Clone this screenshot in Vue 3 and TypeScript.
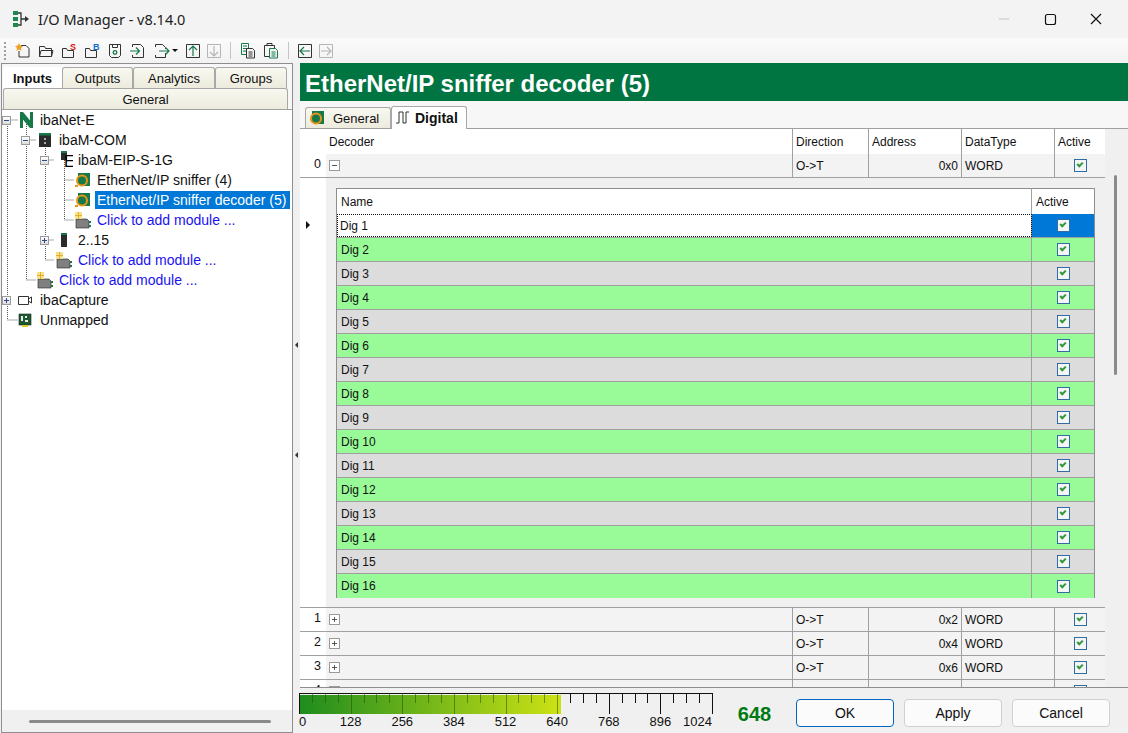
<script setup lang="ts">
interface TreeNode {
  label: string
  level: number
  icon: string
  toggle?: '+' | '-'
  link?: boolean
  selected?: boolean
}

const tree: TreeNode[] = [
  { label: 'ibaNet-E', level: 0, icon: 'net', toggle: '-' },
  { label: 'ibaM-COM', level: 1, icon: 'com', toggle: '-' },
  { label: 'ibaM-EIP-S-1G', level: 2, icon: 'eip', toggle: '-' },
  { label: 'EtherNet/IP sniffer (4)', level: 3, icon: 'mod' },
  { label: 'EtherNet/IP sniffer decoder (5)', level: 3, icon: 'mod', selected: true },
  { label: 'Click to add module ...', level: 3, icon: 'add', link: true },
  { label: '2..15', level: 2, icon: 'slot', toggle: '+' },
  { label: 'Click to add module ...', level: 2, icon: 'add', link: true },
  { label: 'Click to add module ...', level: 1, icon: 'add', link: true },
  { label: 'ibaCapture', level: 0, icon: 'cam', toggle: '+' },
  { label: 'Unmapped', level: 0, icon: 'unm' },
]

const digs = Array.from({ length: 16 }, (_, i) => `Dig ${i + 1}`)
const rows = [
  { n: 1, addr: '0x2' },
  { n: 2, addr: '0x4' },
  { n: 3, addr: '0x6' },
  { n: 4, addr: '0x8' },
]

const labels = [0, 128, 256, 384, 512, 640, 768, 896, 1024]
const ticks = Array.from({ length: 33 }, (_, i) => i)
const scale = 413 / 1024
function tickX(i: number) {
  return Math.round(i * 32 * scale) + 0.5
}
function labelLeft(v: number) {
  return `${v * scale}px`
}
</script>

<template>
  <div class="win">
    <header class="titlebar">
      <svg class="app-icon" width="20" height="20" viewBox="0 0 20 20">
        <path d="M6 4h4v12H6M10 10h5" fill="none" stroke="#333" stroke-width="1.3" />
        <path d="M2 2h5v4H2zM2 8h5v4H2zM2 14h5v4H2z" fill="#1c8a4e" />
        <path d="M14 7l4 3-4 3z" fill="#333" />
      </svg>
      <span class="title">I/O Manager - v8.14.0</span>
      <div class="controls">
        <svg width="46" height="38" viewBox="0 0 46 38"><path d="M18 19h10" stroke="#c4c4c4" /></svg>
        <svg width="46" height="38" viewBox="0 0 46 38"><rect x="18.5" y="14.5" width="10" height="10" rx="2" fill="none" stroke="#111" stroke-width="1.2" /></svg>
        <svg width="46" height="38" viewBox="0 0 46 38"><path d="M18 14l10 10M28 14l-10 10" stroke="#111" stroke-width="1.2" /></svg>
      </div>
    </header>

    <div class="toolbar">
      <span class="grip"></span>
      <svg class="tool" width="18" height="18" viewBox="0 0 18 18">
        <path d="M7 3.5h5l3 3v8.500H5V9" fill="none" stroke="#333" />
        <path d="M5 1l1.200 2.500L9 4 7 6l.5 2.800L5 7.500 2.500 8.800 3 6 1 4l2.800-.5z" fill="#f0a020" />
      </svg>
      <svg class="tool" width="18" height="18" viewBox="0 0 18 18"><path d="M2.500 14.500v-10h5l1 2h6v8zM2.500 14.500l1.500-6h12l-1.500 6" fill="none" stroke="#333" /></svg>
      <svg class="tool" width="18" height="18" viewBox="0 0 18 18">
        <path d="M2.500 15.500v-9h4l1 2h6v7z" fill="none" stroke="#333" />
        <text x="10" y="8" class="tl red">S</text>
      </svg>
      <svg class="tool" width="18" height="18" viewBox="0 0 18 18">
        <path d="M2.500 15.500v-9h4l1 2h6v7z" fill="none" stroke="#333" />
        <text x="10" y="8" class="tl blue">B</text>
      </svg>
      <svg class="tool" width="18" height="18" viewBox="0 0 18 18">
        <path d="M3.500 2.500h11v11l-2 2h-7l-2-2z M6.500 2.500v3h5v-3" fill="none" stroke="#333" />
        <circle cx="9" cy="10.500" r="1.800" fill="none" stroke="#17794a" stroke-width="1.300" />
      </svg>
      <svg class="tool" width="18" height="18" viewBox="0 0 18 18">
        <path d="M3.500 5V2.500h8l3 3v10h-11V13" fill="none" stroke="#333" />
        <path d="M1 9h9M7 5.500L10.500 9 7 12.500" fill="none" stroke="#17794a" stroke-width="1.200" />
      </svg>
      <svg class="tool wide" width="18" height="18" viewBox="0 0 18 18">
        <path d="M3.500 5V2.500h7l3 3V7M13.500 11v4.500h-10V13" fill="none" stroke="#333" />
        <path d="M7 9h10M13.500 5.500L17 9l-3.500 3.500" fill="none" stroke="#17794a" stroke-width="1.200" />
      </svg>
      <span class="caret"></span>
      <svg class="tool" width="16" height="16" viewBox="0 0 16 16">
        <path d="M1.500 1.500h13v13h-13z" fill="none" stroke="#333" />
        <path d="M8 13V3.500M4 7l4-4 4 4" fill="none" stroke="#17794a" stroke-width="1.200" />
      </svg>
      <svg class="tool" width="16" height="16" viewBox="0 0 16 16">
        <path d="M1.500 1.500h13v13h-13z" fill="none" stroke="#b5b5b5" />
        <path d="M8 3v9.500M4 9l4 4 4-4" fill="none" stroke="#b5b5b5" stroke-width="1.200" />
      </svg>
      <span class="sep"></span>
      <svg class="tool" width="18" height="18" viewBox="0 0 18 18">
        <path d="M2.500 1.500h7v11h-7zM4 4h4M4 6.500h4M4 9h4" fill="none" stroke="#17794a" />
        <path d="M7.500 6.500h6l2 2v7.500h-8z M9.500 10h4M9.500 12h4M9.500 14h4" fill="#f3f3f3" stroke="#333" />
      </svg>
      <svg class="tool" width="18" height="18" viewBox="0 0 18 18">
        <path d="M2.500 3.500h10v11h-10zM5 3.500v-2h5v2" fill="none" stroke="#333" />
        <path d="M7.500 6.500h6l2 2v7.500h-8z M9.500 10h4M9.500 12h4M9.500 14h4" fill="#f3f3f3" stroke="#17794a" />
      </svg>
      <span class="sep"></span>
      <svg class="tool" width="16" height="16" viewBox="0 0 16 16">
        <path d="M1.500 1.500h13v13h-13z" fill="none" stroke="#333" />
        <path d="M13 8H3.500M7 4L3 8l4 4" fill="none" stroke="#17794a" stroke-width="1.200" />
      </svg>
      <svg class="tool" width="16" height="16" viewBox="0 0 16 16">
        <path d="M1.500 1.500h13v13h-13z" fill="none" stroke="#b5b5b5" />
        <path d="M3 8h9.500M9 4l4 4-4 4" fill="none" stroke="#b5b5b5" stroke-width="1.200" />
      </svg>
    </div>

    <main class="body">
      <aside class="left">
        <div class="tabs">
          <div class="tab-row">
            <span class="ltab active">Inputs</span>
            <span class="ltab w-out">Outputs</span>
            <span class="ltab w-ana">Analytics</span>
            <span class="ltab w-grp">Groups</span>
          </div>
          <div class="tab-row"><span class="ltab full">General</span></div>
        </div>
        <div class="tree">
          <svg class="tree-lines" width="100" height="215" viewBox="0 0 100 215">
            <path
              d="M5.500 10H16M5.500 10V210M5.500 210H16M24.500 10V170H34M24.500 30H34M43.500 30V150H52M43.500 50H52M62.500 50V110H72M62.500 70H72M62.500 90H72M43.500 130H52"
              fill="none"
              stroke="#555"
              stroke-dasharray="1 1"
            />
          </svg>
          <div v-for="node in tree" :key="node.label + node.level" class="node" :style="{ paddingLeft: node.level * 19 + 'px' }">
            <span class="toggle-slot">
              <span v-if="node.toggle" class="toggle" :class="node.toggle === '-' ? 'minus' : 'plus'"></span>
            </span>
            <svg class="ticon" width="18" height="18" viewBox="0 0 18 18">
              <template v-if="node.icon === 'net'">
                <path d="M3 1h3v16H3zM13 1h3v16h-3z" fill="#17794a" />
                <path d="M3 1h3l10 12v4h-3L3 5z" fill="#17794a" />
              </template>
              <template v-else-if="node.icon === 'com'">
                <rect x="3" y="2" width="12" height="14" fill="#2b2b2b" />
                <rect x="3" y="2" width="12" height="2.500" fill="#17794a" />
                <path d="M8 7h2v2H8zM8 11h2v2H8z" fill="#aaa" />
              </template>
              <template v-else-if="node.icon === 'eip'">
                <rect x="6" y="0" width="6" height="9" fill="#2b2b2b" />
                <rect x="6" y="0" width="6" height="2" fill="#17794a" />
                <text x="9" y="16" class="eip">EIP</text>
              </template>
              <template v-else-if="node.icon === 'mod'">
                <path d="M4 2h12v13H7l-3-3z" fill="#17794a" />
                <circle cx="8" cy="9.500" r="5" fill="none" stroke="#e8941a" stroke-width="2" />
                <circle cx="8" cy="9.500" r="3" fill="#17794a" />
                <path d="M1 14h3v2H1z" fill="#e8941a" />
              </template>
              <template v-else-if="node.icon === 'add'">
                <path d="M2 8h11l2 2v7H2z" fill="#808080" stroke="#222" stroke-width=".6" />
                <path d="M1 1h7v7H1z" fill="#f7e28a" />
                <path d="M4.500 1v7M1 4.500h7" stroke="#e0b030" />
                <path d="M15 10h2v2h-2zM15 14h2v2h-2z" fill="#17794a" />
              </template>
              <template v-else-if="node.icon === 'slot'">
                <rect x="6" y="2" width="6" height="14" fill="#2b2b2b" />
                <rect x="6" y="2" width="6" height="2" fill="#17794a" />
              </template>
              <template v-else-if="node.icon === 'cam'">
                <path d="M1.500 5.500h10v8h-10z M11.500 8l3-2v6l-3-2" fill="#fff" stroke="#333" />
              </template>
              <template v-else>
                <rect x="2" y="3" width="12" height="11" fill="#1c5a34" stroke="#222" stroke-width=".6" />
                <path d="M4 5h2v5H4zM8 5h2v2H8zM8 9h3v2H8z" fill="#e9e9e9" />
                <path d="M5 14h6v2H5z" fill="#d7d020" />
              </template>
            </svg>
            <span class="nlabel" :class="{ link: node.link, selected: node.selected }">{{ node.label }}</span>
          </div>
          <div class="hscroll"></div>
        </div>
      </aside>

      <div class="splitter">
        <span class="arrow left-arrow"></span>
        <span class="arrow left-arrow"></span>
      </div>

      <section class="right">
        <h1 class="heading">EtherNet/IP sniffer decoder (5)</h1>
        <div class="rtabs">
          <span class="rtab">
            <svg width="18" height="18" viewBox="0 0 18 18">
              <path d="M4 2h12v13H7l-3-3z" fill="#17794a" />
              <circle cx="8" cy="9.500" r="5" fill="none" stroke="#e8941a" stroke-width="2" />
              <circle cx="8" cy="9.500" r="2.500" fill="#17794a" />
            </svg>
            General
          </span>
          <span class="rtab active">
            <svg width="16" height="16" viewBox="0 0 16 16">
              <path d="M1 13h3V2h4v11h3V2h3" fill="none" stroke="#333" />
            </svg>
            Digital
          </span>
        </div>

        <div class="grid-wrap">
          <div class="grid">
            <div class="grid-main">
              <div class="mrow mhead">
                <span class="gutter"></span>
                <span class="c dec">Decoder</span>
                <span class="c">Direction</span>
                <span class="c">Address</span>
                <span class="c">DataType</span>
                <span class="c">Active</span>
              </div>

              <div class="mrow mbody">
                <span class="gutter num">0</span>
                <span class="c dec"><span class="box minus"></span></span>
                <span class="c">O-&gt;T</span>
                <span class="c right-t">0x0</span>
                <span class="c">WORD</span>
                <span class="c mid"><span class="check"></span></span>
              </div>

              <div class="detail">
                <span class="gutter">
                  <span class="row-arrow"></span>
                </span>
                <div class="subgrid">
                  <div class="srow shead">
                    <span class="sc name">Name</span>
                    <span class="sc">Active</span>
                  </div>
                  <div
                    v-for="(d, i) in digs"
                    :key="d"
                    class="srow"
                    :class="{ current: i === 0, green: i % 2 === 1, gray: i > 0 && i % 2 === 0 }"
                  >
                    <span class="sc name"><span class="cell-text">{{ d }}</span></span>
                    <span class="sc mid"><span class="check"></span></span>
                  </div>
                </div>
              </div>

              <div v-for="r in rows" :key="r.n" class="mrow mbody">
                <span class="gutter num">{{ r.n }}</span>
                <span class="c dec"><span class="box plus"></span></span>
                <span class="c">O-&gt;T</span>
                <span class="c right-t">{{ r.addr }}</span>
                <span class="c">WORD</span>
                <span class="c mid"><span class="check"></span></span>
              </div>
            </div>
            <div class="vscroll"><span class="thumb"></span></div>
          </div>
        </div>

        <footer class="foot">
          <div class="gauge">
            <svg class="scale" width="416" height="24" viewBox="0 0 416 24">
              <defs>
                <linearGradient id="fill" x1="0" x2="1" y1="0" y2="0">
                  <stop offset="0" stop-color="#1e8c1e" />
                  <stop offset="1" stop-color="#cde214" />
                </linearGradient>
              </defs>
              <rect x="0" y="2" width="262" height="19" fill="url(#fill)" />
              <path d="M0.500 0V21M0 0.500H414" stroke="#111" fill="none" />
              <path
                v-for="i in ticks"
                :key="i"
                :d="`M${tickX(i)} 0V${i % 4 === 0 ? 21 : 10}`"
                :stroke="tickX(i) < 262 ? 'rgba(40,80,0,.55)' : '#111'"
              />
              <path d="M0.500 0V21" stroke="#111" />
            </svg>
            <span v-for="v in labels" :key="v" class="glabel" :class="{ first: v === 0, last: v === 1024 }" :style="{ left: labelLeft(v) }">{{ v }}</span>
          </div>
          <span class="value">648</span>
          <button class="btn primary" type="button">OK</button>
          <button class="btn" type="button">Apply</button>
          <button class="btn" type="button">Cancel</button>
        </footer>
      </section>
    </main>
  </div>
</template>

<style>
html, body {
  margin: 0;
  background: #f3f3f3;
}
</style>

<style scoped>
.win {
  width: 1128px;
  height: 733px;
  overflow: hidden;
  display: flex;
  flex-direction: column;
  background: #f0f0f0;
  font-family: "Liberation Sans", Arial, sans-serif;
  color: #111;
  box-sizing: border-box;
}

.titlebar {
  height: 38px;
  flex: none;
  display: flex;
  align-items: center;
  background: #f3f3f3;
  padding-left: 11px;
}
.app-icon { margin-right: 7px; }
.title { font-size: 14.500px; color: #222; font-family: "Noto Sans", sans-serif; }
.controls { margin-left: auto; display: flex; margin-right: 9px; }

.toolbar {
  height: 25px;
  flex: none;
  display: flex;
  align-items: center;
  gap: 5px;
  padding-left: 4px;
  background: linear-gradient(#fbfbfb, #f2f2f2);
}
.grip {
  width: 2px;
  height: 18px;
  margin-right: 3px;
  background: repeating-linear-gradient(#a0a0a0 0 2px, transparent 2px 4px);
}
.tool { flex: none; }
.tool.wide { margin-right: -3px; }
.tl { font: 700 9px "Liberation Sans", sans-serif; }
.red { fill: #e01010; }
.blue { fill: #1070d0; }
.caret {
  width: 0;
  height: 0;
  border: 3px solid transparent;
  border-top: 3px solid #111;
  border-bottom: 0;
  margin-right: 2px;
}
.sep { width: 1px; height: 17px; background: #c4c4c4; margin: 0 3px; }

.body {
  flex: 1;
  min-height: 0;
  display: flex;
}

.left {
  width: 292px;
  margin-left: 1px;
  box-sizing: border-box;
  border: 1px solid #8e8e8e;
  display: flex;
  flex-direction: column;
  background: #fff;
}
.tabs {
  background: #f7f7f7;
  padding-top: 3px;
  border-bottom: 1px solid #a0a0a0;
  flex: none;
}
.tab-row { display: flex; height: 21px; padding: 0 1px; }
.tab-row + .tab-row { height: 21px; }
.ltab {
  box-sizing: border-box;
  text-align: center;
  font-size: 13px;
  line-height: 21px;
  background: linear-gradient(#f8f8f0, #ecebdd);
  border: 1px solid #a8a8a8;
  border-bottom: 0;
  border-radius: 3px 3px 0 0;
  width: 59px;
}
.ltab.active { background: #fff; font-weight: 700; border-color: #fff; }
.w-out { width: 71px; margin-left: 0; }
.w-ana { width: 82px; }
.w-grp { width: 72px; }
.ltab.full { width: 285px; }

.tree {
  flex: 1;
  position: relative;
  padding-top: 0;
  background: #fff;
}
.tree-lines { position: absolute; left: 0; top: 0; }
.node {
  height: 20px;
  display: flex;
  align-items: center;
  position: relative;
}
.toggle-slot { width: 15px; flex: none; display: flex; align-items: center; }
.toggle {
  width: 9px;
  height: 9px;
  box-sizing: border-box;
  border: 1px solid #9a9a9a;
  background: linear-gradient(#fff, #dcdcdc);
  margin-left: 0;
  position: relative;
}
.toggle::before {
  content: "";
  position: absolute;
  left: 1px;
  right: 1px;
  top: 3px;
  height: 1px;
  background: #2a4a8a;
}
.toggle.plus::after {
  content: "";
  position: absolute;
  top: 1px;
  bottom: 1px;
  left: 3px;
  width: 1px;
  background: #2a4a8a;
}
.ticon { flex: none; margin-right: 3px; }
.nlabel {
  font-size: 14px;
  line-height: 18px;
  padding: 0 2px;
  white-space: nowrap;
  color: #111;
}
.nlabel.link { color: #1a12f0; }
.nlabel.selected { background: #0078d7; color: #fff; padding-right: 4px; }
.hscroll {
  position: absolute;
  left: 27px;
  right: 21px;
  bottom: 9px;
  height: 3px;
  border-radius: 2px;
  background: #8a8a8a;
}
.tree::after {
  content: "";
  position: absolute;
  left: 0;
  right: 0;
  bottom: 0;
  height: 22px;
  background: #f0f0f0;
}
.hscroll { z-index: 1; }

.splitter {
  width: 7px;
  flex: none;
  display: flex;
  flex-direction: column;
  align-items: center;
  padding-top: 279px;
  gap: 104px;
}
.arrow {
  width: 0;
  height: 0;
  border: 3px solid transparent;
  border-left: 0;
  border-right: 3px solid #333;
}

.right {
  flex: 1;
  min-width: 0;
  display: flex;
  flex-direction: column;
  background: #f7f7f7;
}
.heading {
  margin: 0;
  height: 38px;
  flex: none;
  background: #007542;
  color: #fff;
  font-size: 24px;
  font-weight: 700;
  line-height: 42px;
  padding-left: 5px;
  white-space: nowrap;
}
.rtabs {
  height: 25px;
  flex: none;
  display: flex;
  align-items: flex-end;
  padding: 0 0 0 5px;
  border-bottom: 1px solid #a0a0a0;
  background: #f7f7f7;
  box-sizing: border-box;
  margin-top: 3px;
}
.rtab {
  height: 21px;
  box-sizing: border-box;
  border: 1px solid #a8a8a8;
  border-bottom: 0;
  border-radius: 3px 3px 0 0;
  background: linear-gradient(#f8f8f0, #ecebdd);
  font-size: 13px;
  display: flex;
  align-items: center;
  gap: 7px;
  padding: 0 7px 0 2px;
  width: 86px;
}
.rtab.active {
  background: #fff;
  font-weight: 700;
  font-size: 14px;
  width: 76px;
  height: 23px;
  margin-bottom: -1px;
  gap: 4px;
  padding-left: 3px;
}

.grid-wrap {
  flex: 1;
  min-height: 0;
  background: #fff;
  overflow: hidden;
  border-bottom: 1px solid #8e8e8e;
}
.grid { display: flex; height: 100%; font-size: 12px; }
.grid-main { width: 805px; flex: none; overflow: hidden; background: #f0f0f0; }
.vscroll {
  flex: 1;
  background: #f0f0f0;
  position: relative;
}
.thumb {
  position: absolute;
  left: 9px;
  top: 46px;
  width: 3px;
  height: 200px;
  border-radius: 2px;
  background: #8a8a8a;
}

.gutter {
  width: 26px;
  flex: none;
  box-sizing: border-box;
  background: #fff;
}
.num { text-align: right; padding-right: 5px; line-height: 21px; font-size: 12.500px; }
.mrow {
  display: grid;
  grid-template-columns: 26px 467px 76px 93px 93px 50px;
  height: 24px;
}
.mrow > .c { border-right: 1px solid #a0a0a0; }
.mrow > .c:last-child { border-right: 0; }
.c {
  display: flex;
  align-items: center;
  padding: 0 3px;
  box-sizing: border-box;
  white-space: nowrap;
  min-width: 0;
}
.mhead { height: 25px; background: #fff; }
.mhead > .c { padding-left: 3px; }
.mbody {
  background: #f3f3f3;
  border-bottom: 1px solid #a0a0a0;
  box-sizing: border-box;
}
.right-t { justify-content: flex-end; }
.mid { justify-content: center; }
.box {
  width: 11px;
  height: 11px;
  box-sizing: border-box;
  border: 1px solid #9a9a9a;
  background: #fff;
  position: relative;
}
.box::before {
  content: "";
  position: absolute;
  left: 2px;
  right: 2px;
  top: 4px;
  height: 1px;
  background: #555;
}
.box.plus::after {
  content: "";
  position: absolute;
  top: 2px;
  bottom: 2px;
  left: 4px;
  width: 1px;
  background: #555;
}
.check {
  width: 13px;
  height: 13px;
  box-sizing: border-box;
  border: 1px solid #2f6ea5;
  background: #f5f5f5;
  position: relative;
}
.check::after {
  content: "";
  position: absolute;
  left: 3px;
  top: 1px;
  width: 4px;
  height: 6px;
  border: solid #2f9a3a;
  border-width: 0 2px 2px 0;
  transform: rotate(45deg);
  box-sizing: border-box;
}
.detail {
  display: flex;
  height: 430px;
  border-bottom: 1px solid #a0a0a0;
  box-sizing: border-box;
  background: #f0f0f0;
}
.detail > .gutter {
  position: relative;
}
.row-arrow {
  position: absolute;
  left: 6px;
  top: 43px;
  width: 0;
  height: 0;
  border: 4px solid transparent;
  border-right: 0;
  border-left: 4px solid #111;
}
.subgrid {
  width: 759px;
  height: 410px;
  margin: 10px 0 0 10px;
  border: 1px solid #8e8e8e;
  border-top-color: #8e8e8e;
  box-sizing: border-box;
  background: #fff;
}
.srow {
  display: grid;
  grid-template-columns: 695px 1fr;
  height: 24px;
  box-sizing: border-box;
  border-bottom: 1px solid #a0a0a0;
}
.srow:last-child { border-bottom: 0; height: 24px; }
.shead { height: 25px; border-bottom: 0; }
.sc {
  display: flex;
  align-items: center;
  padding-left: 4px;
  box-sizing: border-box;
  border-right: 1px solid #a0a0a0;
  white-space: nowrap;
}
.sc:last-child { border-right: 0; }
.sc.mid { justify-content: center; padding-left: 0; }
.green { background: #98fb98; }
.gray { background: #dcdcdc; }
.current .name { outline: 1px dotted #111; outline-offset: -1px; padding-left: 3px; background: #fff; }
.current .mid { background: #0078d7; }

.foot {
  height: 45px;
  flex: none;
  display: flex;
  align-items: flex-start;
  background: #f0f0f0;
}
.gauge {
  position: relative;
  width: 414px;
  height: 45px;
  margin-left: -1px;
  flex: none;
}
.scale { position: absolute; left: 0; top: 5px; }
.glabel {
  position: absolute;
  top: 26px;
  font-size: 13px;
  line-height: 16px;
  transform: translateX(-50%);
  white-space: nowrap;
}
.glabel.first { transform: none; }
.glabel.last { transform: translateX(-100%); }
.value {
  width: 83px;
  text-align: center;
  color: #007a12;
  font-weight: 700;
  font-size: 20px;
  line-height: 26px;
  margin-top: 13px;
  margin-left: 0;
  flex: none;
}
.btn {
  width: 98px;
  height: 28px;
  margin-top: 11px;
  margin-right: 10px;
  box-sizing: border-box;
  border: 1px solid #d0d0d0;
  border-radius: 4px;
  background: #fbfbfb;
  font: 14px "Liberation Sans", sans-serif;
  color: #111;
  padding: 0;
}
.btn.primary { border-color: #0067c0; }
</style>
